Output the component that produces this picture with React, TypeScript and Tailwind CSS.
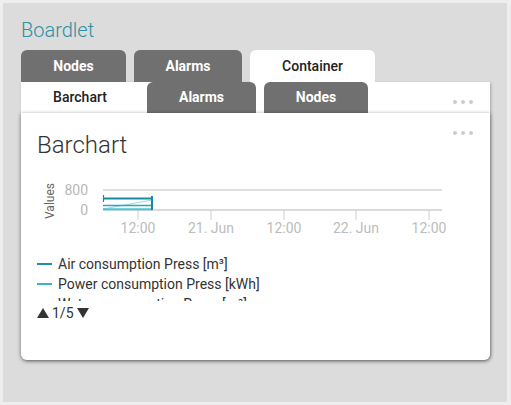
import React from "react";

const Dots = ({ className }: { className: string }) => (
  <div className={"flex gap-[4px] " + className}>
    <span className="w-[4px] h-[4px] rounded-full bg-[#c9ccd3]" />
    <span className="w-[4px] h-[4px] rounded-full bg-[#c9ccd3]" />
    <span className="w-[4px] h-[4px] rounded-full bg-[#c9ccd3]" />
  </div>
);

const Chart = () => {
  const ox = 37;
  const oy = 170;
  const ticks = [138, 211, 284, 356, 429];
  const labels = ["12:00", "21. Jun", "12:00", "22. Jun", "12:00"];
  return (
    <svg width={410} height={72} className="block" style={{ fontFamily: "Roboto, sans-serif" }}>
      <g transform={`translate(${-ox},${-oy})`}>
        <text
          x={50}
          y={201}
          transform="rotate(-90 50 201)"
          textAnchor="middle"
          dominantBaseline="central"
          fontSize={12}
          fill="#666"
        >
          Values
        </text>
        <text x={88} y={195} textAnchor="end" fontSize={14} fill="#b8b8b8">800</text>
        <text x={88} y={215} textAnchor="end" fontSize={14} fill="#b8b8b8">0</text>
        <line x1={103} y1={190} x2={442} y2={190} stroke="#d3d3d3" strokeWidth={1.3} />
        <line x1={103} y1={210} x2={442} y2={210} stroke="#cfcfcf" strokeWidth={1.3} />
        {ticks.map((t, i) => (
          <g key={i}>
            <line x1={t} y1={210} x2={t} y2={220} stroke="#cfcfcf" strokeWidth={1} />
            <text x={t} y={233} textAnchor="middle" fontSize={14} fill="#bcbcbc">
              {labels[i]}
            </text>
          </g>
        ))}
        <line x1={103} y1={209} x2={152} y2={200} stroke="#9fdbe7" strokeWidth={1.2} />
        <line x1={103} y1={209.2} x2={152} y2={209.2} stroke="#4cc3d8" strokeWidth={2} />
        <line x1={103} y1={205.5} x2={152} y2={205.5} stroke="#2aa6bf" strokeWidth={1.6} />
        <line x1={103} y1={198.5} x2={152} y2={198.5} stroke="#1a8aa3" strokeWidth={2} />
        <line x1={103.5} y1={195} x2={103.5} y2={202} stroke="#1a8aa3" strokeWidth={1.2} />
        <line x1={152} y1={196} x2={152} y2={210} stroke="#1a8aa3" strokeWidth={2} />
      </g>
    </svg>
  );
};

const LegendRow = ({ color, text }: { color: string; text: string }) => (
  <div className="flex items-center gap-[6px] h-[20px] leading-[20px] whitespace-nowrap">
    <span className="w-[15px] h-[2px] shrink-0" style={{ backgroundColor: color }} />
    <span className="text-[14px] text-[#333]">{text}</span>
  </div>
);

export default function App() {
  return (
    <div className="w-[511px] h-[405px] bg-[#eeeeee] pt-[3px] pl-[3px] pr-[4px] pb-[3px] font-['Roboto',sans-serif]">
      <div className="h-full bg-[#dcdcdc] pl-[18px] pr-[17px] pt-[15px]">
        <div className="text-[20px] leading-[24px] font-light text-[#2e8fa6]">Boardlet</div>
        <div className="flex gap-[8px] mt-[8px] h-[32px]">
          <div className="w-[105px] h-full rounded-t-[6px] bg-[#707070] flex items-center justify-center text-white text-[14px] font-bold">
            Nodes
          </div>
          <div className="w-[108px] h-full rounded-t-[6px] bg-[#707070] flex items-center justify-center text-white text-[14px] font-bold">
            Alarms
          </div>
          <div className="w-[125px] h-full rounded-t-[6px] bg-white flex items-center justify-center text-[#222] text-[14px] font-medium">
            Container
          </div>
        </div>
        <div className="bg-white shadow-[1px_1px_3px_rgba(0,0,0,0.25)] rounded-b-[6px]">
          <div className="relative flex h-[31px]">
            <div className="w-[118px] h-full flex items-center justify-center text-[#222] text-[14px] font-medium">
              Barchart
            </div>
            <div className="flex gap-[8px] ml-[8px]">
              <div className="w-[109px] h-full rounded-t-[6px] bg-[#707070] flex items-center justify-center text-white text-[14px] font-bold">
                Alarms
              </div>
              <div className="w-[104px] h-full rounded-t-[6px] bg-[#707070] flex items-center justify-center text-white text-[14px] font-bold">
                Nodes
              </div>
            </div>
            <Dots className="absolute right-[17px] top-[18px]" />
          </div>
          <div className="relative h-[247px] bg-white rounded-b-[6px] shadow-[0_1px_4px_rgba(0,0,0,0.45)] pl-[16px] pt-[18px]">
            <Dots className="absolute right-[17px] top-[18px]" />
            <div className="text-[24px] leading-[28px] font-light text-[#333]">Barchart</div>
            <div className="mt-[11px]">
              <Chart />
            </div>
            <div className="mt-[12px] h-[47px] overflow-hidden">
              <LegendRow color="#1f8ea8" text="Air consumption Press [m³]" />
              <LegendRow color="#3ab5cb" text="Power consumption Press [kWh]" />
              <LegendRow color="#5fc6d8" text="Water consumption Press [m³]" />
            </div>
            <div className="mt-[2px] flex items-center h-[20px] gap-[3px] text-[14px] text-[#333] leading-[20px]">
              <svg width={12} height={10} className="block">
                <polygon points="6,0 12,10 0,10" fill="#333" />
              </svg>
              <span>1/5</span>
              <svg width={12} height={10} className="block">
                <polygon points="0,0 12,0 6,10" fill="#333" />
              </svg>
            </div>
          </div>
        </div>
      </div>
    </div>
  );
}
